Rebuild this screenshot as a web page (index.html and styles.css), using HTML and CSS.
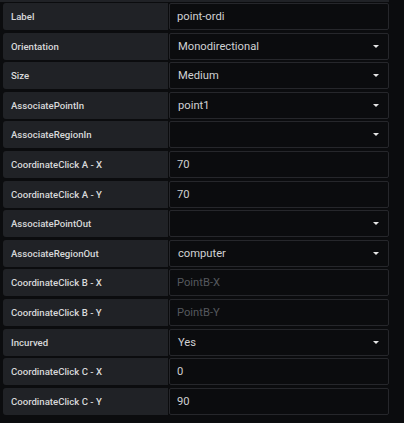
FILE: index.html
```html
<!DOCTYPE html>
<html>
<head>
<meta charset="utf-8">
<link rel="stylesheet" href="styles.css">
</head>
<body>
<div class="panel">
  <div class="topband"></div>
  <div class="form">
    <div class="row"><div class="label">Label</div><div class="field"><span class="val">point-ordi</span></div></div>
    <div class="row"><div class="label">Orientation</div><div class="field select"><span class="val">Monodirectional</span><span class="caret"></span></div></div>
    <div class="row"><div class="label">Size</div><div class="field select"><span class="val">Medium</span><span class="caret"></span></div></div>
    <div class="row"><div class="label">AssociatePointIn</div><div class="field select"><span class="val">point1</span><span class="caret"></span></div></div>
    <div class="row"><div class="label">AssociateRegionIn</div><div class="field select"><span class="val"></span><span class="caret"></span></div></div>
    <div class="row"><div class="label">CoordinateClick A - X</div><div class="field"><span class="val">70</span></div></div>
    <div class="row"><div class="label">CoordinateClick A - Y</div><div class="field"><span class="val">70</span></div></div>
    <div class="row"><div class="label">AssociatePointOut</div><div class="field select"><span class="val"></span><span class="caret"></span></div></div>
    <div class="row"><div class="label">AssociateRegionOut</div><div class="field select"><span class="val">computer</span><span class="caret"></span></div></div>
    <div class="row"><div class="label">CoordinateClick B - X</div><div class="field"><span class="val ph">PointB-X</span></div></div>
    <div class="row"><div class="label">CoordinateClick B - Y</div><div class="field"><span class="val ph">PointB-Y</span></div></div>
    <div class="row"><div class="label">Incurved</div><div class="field select"><span class="val">Yes</span><span class="caret"></span></div></div>
    <div class="row"><div class="label">CoordinateClick C - X</div><div class="field"><span class="val">0</span></div></div>
    <div class="row"><div class="label">CoordinateClick C - Y</div><div class="field"><span class="val">90</span></div></div>
  </div>
</div>
</body>
</html>
```
FILE: styles.css
```css
html, body {
  margin: 0;
  padding: 0;
  background: #0b0c0e;
}
body {
  font-family: Roboto, "Liberation Sans", sans-serif;
  width: 404px;
  height: 423px;
  overflow: hidden;
}
.panel {
  width: 389px;
}
.topband {
  height: 2px;
  background: #202226;
}
.form {
  padding: 1px 0 0 3px;
  display: flex;
  flex-direction: column;
  gap: 2.6px;
}
.row {
  display: flex;
  height: 27px;
}
.label {
  width: 165px;
  flex: none;
  box-sizing: border-box;
  background: #202226;
  border-radius: 3px 0 0 3px;
  color: #d8d9da;
  font-size: 9.6px;
  font-weight: 500;
  padding-left: 8px;
  display: flex;
  align-items: center;
  margin-right: 1px;
}
.field {
  flex: 1;
  box-sizing: border-box;
  background: #0b0c0e;
  border: 1px solid #26272b;
  border-radius: 2px;
  display: flex;
  align-items: center;
  padding: 0 9px 0 7px;
  color: #d0d1d3;
  font-size: 11.2px;
}
.field.select {
  padding-left: 8px;
}
.val {
  flex: 1;
}
.val.ph {
  color: #55585d;
}
.caret {
  width: 0;
  height: 0;
  border-left: 3px solid transparent;
  border-right: 3px solid transparent;
  border-top: 3px solid #e6e6e6;
}
```
